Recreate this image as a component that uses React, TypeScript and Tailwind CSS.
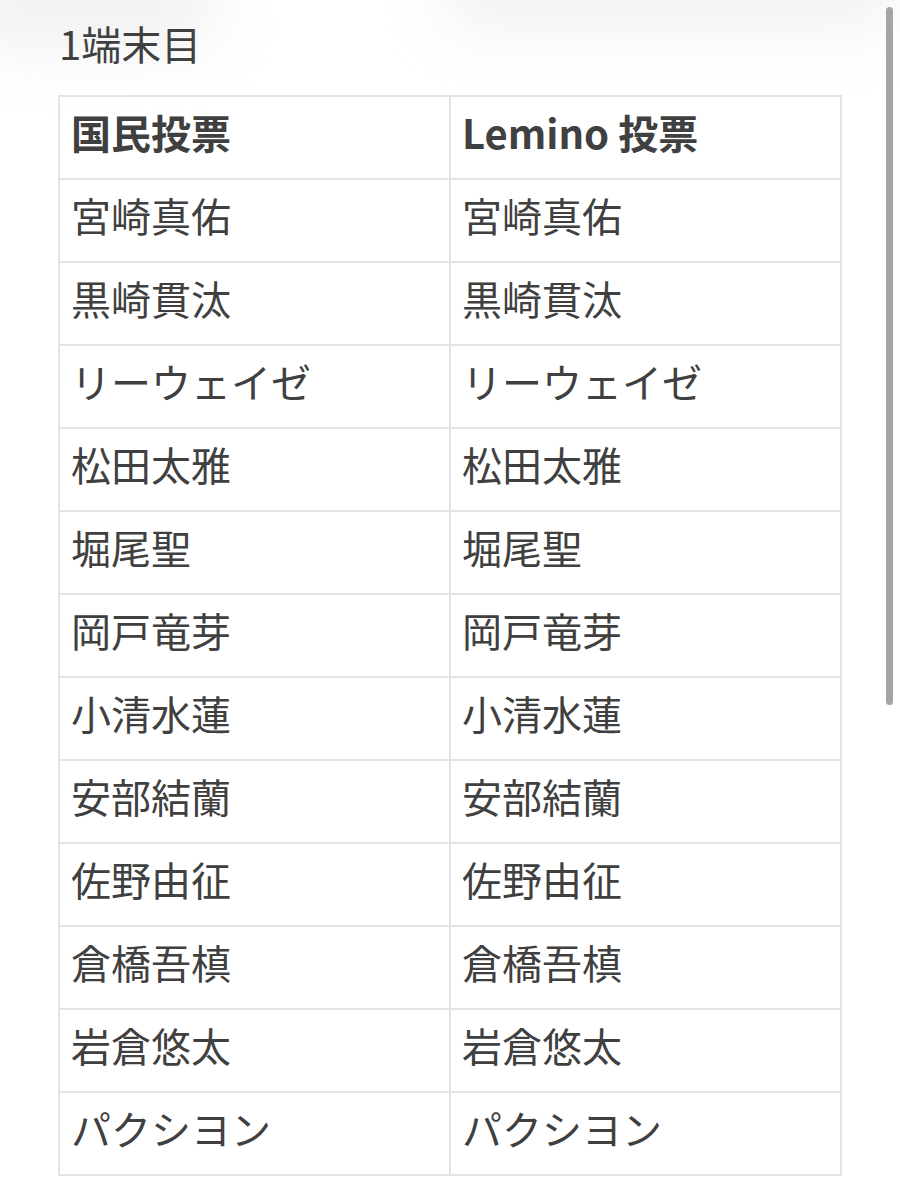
import React from "react";

const rows: [string, string][] = [
  ["宮崎真佑", "宮崎真佑"],
  ["黒崎貫汰", "黒崎貫汰"],
  ["リーウェイゼ", "リーウェイゼ"],
  ["松田太雅", "松田太雅"],
  ["堀尾聖", "堀尾聖"],
  ["岡戸竜芽", "岡戸竜芽"],
  ["小清水蓮", "小清水蓮"],
  ["安部結蘭", "安部結蘭"],
  ["佐野由征", "佐野由征"],
  ["倉橋吾槙", "倉橋吾槙"],
  ["岩倉悠太", "岩倉悠太"],
  ["パクシヨン", "パクシヨン"],
];

export default function App() {
  return (
    <div
      className="relative w-[900px] h-[1200px] overflow-hidden bg-white text-[#404040]"
      style={{ fontFamily: '"Noto Sans CJK JP", "Noto Sans", sans-serif' }}
    >
      <div className="pointer-events-none absolute left-[-40px] top-[-40px] w-[260px] h-[90px] rounded-full bg-[#ececec] blur-[30px] opacity-70" />
      <div className="pointer-events-none absolute left-[440px] top-[-50px] w-[460px] h-[80px] rounded-full bg-[#ececec] blur-[30px] opacity-70" />
      <div className="relative pl-[58px] pt-[19px]">
        <div className="text-[40px] leading-[48px] pl-[1px] mb-[28px]">1端末目</div>
        <table className="border-collapse w-[784px] table-fixed">
          <thead>
            <tr>
              <th className="border-2 border-[#e4e4e4] h-[83px] pl-[11px] pr-[12px] pb-[12px] text-left font-bold text-[40px] leading-none">国民投票</th>
              <th className="border-2 border-[#e4e4e4] h-[83px] pl-[11px] pr-[12px] pb-[12px] text-left font-bold text-[40px] leading-none">Lemino 投票</th>
            </tr>
          </thead>
          <tbody>
            {rows.map(([a, b], i) => (
              <tr key={i}>
                <td className="border-2 border-[#e4e4e4] h-[83px] pl-[11px] pr-[12px] pb-[12px] text-[40px] leading-none">{a}</td>
                <td className="border-2 border-[#e4e4e4] h-[83px] pl-[11px] pr-[12px] pb-[12px] text-[40px] leading-none">{b}</td>
              </tr>
            ))}
          </tbody>
        </table>
      </div>
      <div className="absolute left-[886px] top-[7px] w-[7px] h-[698px] rounded-full bg-[#a4a4a4]" />
    </div>
  );
}
